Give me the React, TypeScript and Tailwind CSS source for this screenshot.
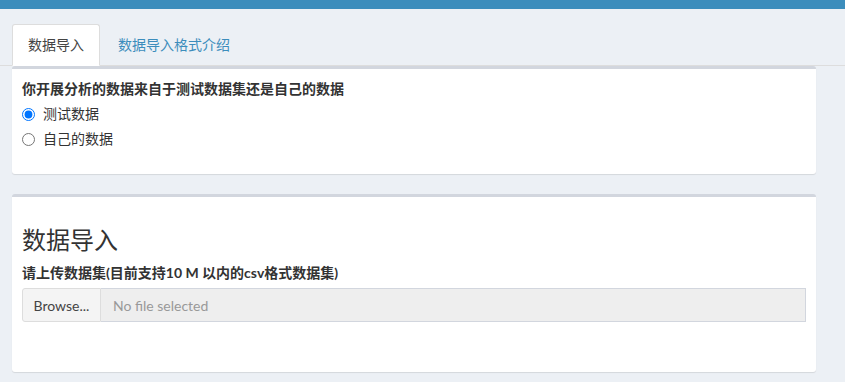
const font = "font-['Lato','Noto_Sans_CJK_SC',sans-serif]";

function Tabs() {
  return (
    <ul className="flex border-b border-[#ddd] pl-[12px] pt-[15px]">
      <li className="-mb-px mr-[2px]">
        <a className="block rounded-t-[3px] border border-b-transparent border-[#ddd] bg-white px-[15px] py-[10px] text-[14px] leading-[20px] text-[#444]">
          数据导入
        </a>
      </li>
      <li className="-mb-px mr-[2px]">
        <a className="block border border-transparent px-[15px] py-[10px] text-[14px] leading-[20px] text-[#3c8dbc]">
          数据导入格式介绍
        </a>
      </li>
    </ul>
  );
}

function Box({ children }: { children: React.ReactNode }) {
  return (
    <div className="rounded-[3px] border-t-[3px] border-[#d2d6de] bg-white p-[10px] shadow-[0_1px_1px_rgba(0,0,0,0.1)]">
      {children}
    </div>
  );
}

function Radio({ label, checked }: { label: string; checked?: boolean }) {
  return (
    <label className="flex h-[20px] items-center gap-[8px] text-[14px] leading-[20px] text-[#333]">
      <input type="radio" name="src" defaultChecked={checked} className="m-0 h-[13px] w-[13px]" />
      <span>{label}</span>
    </label>
  );
}

export default function App() {
  return (
    <div className={`min-h-[382px] w-[845px] bg-[#ecf0f5] ${font}`}>
      <div className="h-[9px] bg-[#3c8dbc]" />
      <Tabs />
      <div className="flex flex-col gap-[20px] pl-[12px] pr-[29px]">
        <Box>
          <div className="pb-[15px]">
            <div className="text-[14px] font-bold leading-[20px] text-[#333]">
              你开展分析的数据来自于测试数据集还是自己的数据
            </div>
            <div className="mt-[5px] flex flex-col gap-[5px]">
              <Radio label="测试数据" checked />
              <Radio label="自己的数据" />
            </div>
          </div>
        </Box>
        <Box>
          <h3 className="mt-[20px] mb-[10px] text-[24px] leading-[26px] font-normal text-[#333]">数据导入</h3>
          <div className="mb-[5px] text-[14px] font-bold leading-[20px] text-[#333]">
            请上传数据集(目前支持10 M 以内的csv格式数据集)
          </div>
          <div className="flex h-[34px]">
            <span className="flex w-[79px] items-center justify-center rounded-l-[3px] border border-[#ddd] bg-[#f4f4f4] text-[14px] text-[#444]">
              Browse...
            </span>
            <span className="flex flex-1 items-center border border-l-0 border-[#d2d6de] bg-[#eee] px-[12px] text-[14px] text-[#999]">
              No file selected
            </span>
          </div>
          <div className="h-[40px]" />
        </Box>
      </div>
    </div>
  );
}
